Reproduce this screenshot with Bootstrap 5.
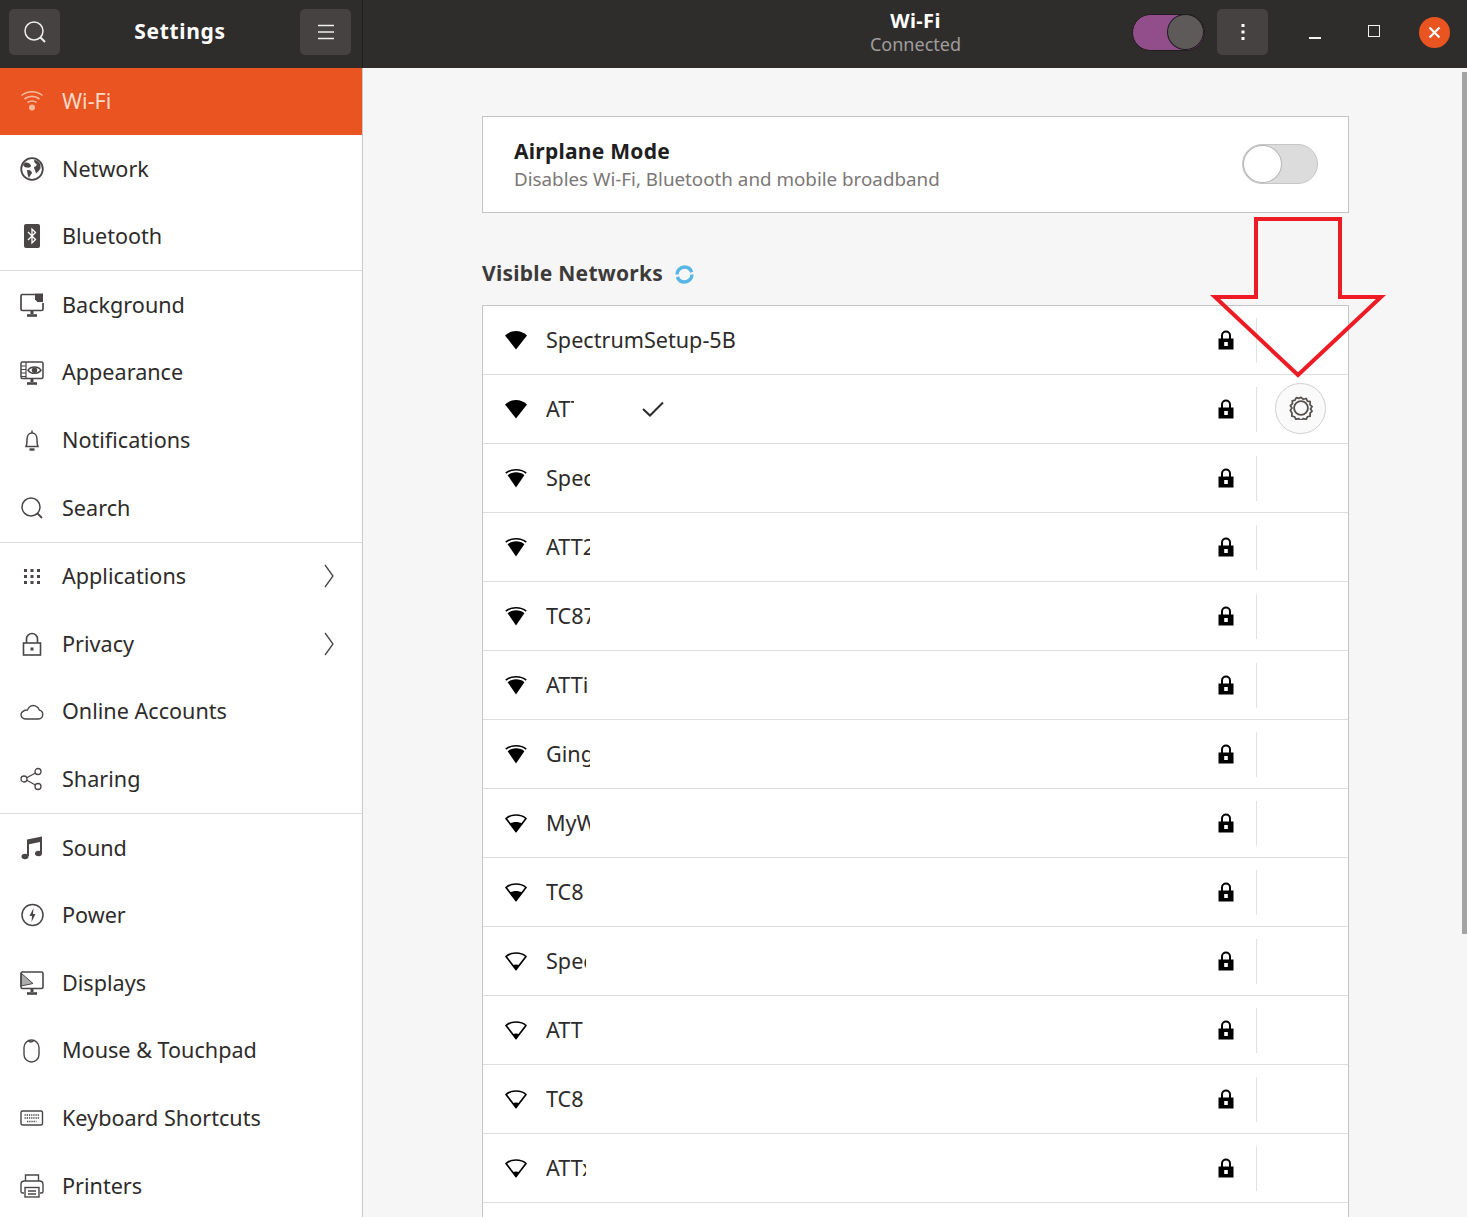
<!DOCTYPE html>
<html lang="en">
<head>
    <title>Settings</title>
    <meta charset="utf-8">
    <meta name="viewport" content="width=device-width, initial-scale=1">
    <link href="https://cdn.jsdelivr.net/npm/bootstrap@5.3.3/dist/css/bootstrap.min.css" rel="stylesheet">
    <script src="https://cdn.jsdelivr.net/npm/bootstrap@5.3.3/dist/js/bootstrap.bundle.min.js"></script>
    <style>
        html, body {
            height: 100%;
            overflow: hidden;
        }
        body {
            font-family: "Noto Sans", "Open Sans", sans-serif;
            background-color: #f6f6f6;
            color: #2e2b2b;
        }
        .app-window {
            height: 1217px;
            width: 1467px;
            position: relative;
            overflow: hidden;
        }
        .title-bar {
            height: 67.5px;
            background-color: #2f2c2c;
            color: #fff;
            flex-shrink: 0;
        }
        .title-left {
            width: 363px;
            padding: 0 11px 3px 9px;
            border-right: 1px solid #1f1d1d;
        }
        .title-right {
            padding: 0 17px 3px 0;
            position: relative;
        }
        .head-btn {
            width: 51px;
            height: 46px;
            background-color: #464242;
            border-radius: 5px;
        }
        .app-name {
            font-weight: 700;
            font-size: 21px;
            letter-spacing: .7px;
            margin-bottom: 2px;
        }
        .page-title {
            font-weight: 700;
            font-size: 20px;
            line-height: 24px;
            letter-spacing: .4px;
        }
        .page-sub {
            font-size: 18px;
            line-height: 22px;
            color: #a09d9d;
        }
        .title-center {
            width: 1105px;
            left: 0;
            top: 9px;
            position: absolute;
        }
        .head-switch {
            width: 73px;
            height: 37px;
            background-color: #924d8b;
            border-radius: 19px;
            border: 1px solid #1f1d1d;
            margin-right: 12px;
        }
        .head-knob {
            width: 37px;
            height: 36px;
            border-radius: 50%;
            background-color: #5e5a5a;
            border: 1px solid #1f1d1d;
        }
        .win-min {
            width: 12px;
            height: 2px;
            background-color: #f2f2f2;
            margin: 12px 0 0 41px;
        }
        .win-max {
            width: 12px;
            height: 12px;
            border: 1.5px solid #f2f2f2;
            margin: 0 0 2px 47px;
        }
        .win-close {
            width: 31px;
            height: 31px;
            border-radius: 50%;
            background-color: #e95420;
            margin-left: 39px;
        }
        .side-nav {
            width: 363px;
            background-color: #fff;
            border-right: 1px solid #c9c9c9;
            flex-shrink: 0;
        }
        .side-row {
            height: 67.6px;
            padding: 0 28px 0 20px;
            gap: 18px;
            font-size: 21.6px;
            color: #2e2b2b;
            text-decoration: none;
        }
        .side-row svg {
            flex-shrink: 0;
            color: #4a4646;
        }
        .side-active {
            background-color: #e95420;
            color: #fbd9c8;
        }
        .side-active svg {
            color: #f9b89c;
        }
        .side-sep {
            height: 1px;
            background-color: #dcdcdc;
        }
        .side-more {
            color: #6e6a6a;
        }
        .main-pane {
            padding: 48.5px 0 0 119px;
            position: relative;
        }
        .main-col {
            width: 867px;
        }
        .air-box {
            height: 97px;
            background-color: #fff;
            border: 1px solid #c4c4c4;
            padding: 0 30px 0 31px;
        }
        .air-title {
            font-weight: 700;
            font-size: 21px;
            line-height: 27px;
            letter-spacing: .25px;
            color: #201e1e;
        }
        .air-sub {
            font-size: 18.8px;
            line-height: 26px;
            padding-top: 1px;
            color: #7b7777;
        }
        .air-switch {
            width: 76px;
            height: 40px;
            background-color: #dcdcdc;
            border: 1px solid #c6c6c6;
            border-radius: 20px;
            margin-bottom: 2px;
        }
        .air-knob {
            width: 39px;
            height: 38px;
            border-radius: 50%;
            background-color: #fff;
            border: 1px solid #b4b4b4;
        }
        .net-head {
            height: 92px;
            padding-top: 30px;
            gap: 12px;
            font-weight: 700;
            font-size: 21px;
            letter-spacing: .25px;
            color: #3d3a3a;
        }
        .net-list {
            background-color: #fff;
            border: 1px solid #c4c4c4;
            border-bottom: 0;
        }
        .net-row {
            height: 69px;
            padding-left: 21px;
            border-bottom: 1px solid #dedede;
        }
        .net-name {
            margin: 0 0 0 18px;
            font-size: 21.6px;
            color: #2e2b2b;
            white-space: nowrap;
            overflow: hidden;
        }
        .net-check {
            margin-left: 68px;
        }
        .net-lock {
            margin-left: auto;
        }
        .net-gap {
            width: 92px;
            height: 45px;
            margin-left: 22px;
            border-left: 1px solid #e2e2e2;
            flex-shrink: 0;
        }
        .gear-btn {
            width: 51px;
            height: 51px;
            border-radius: 50%;
            background-color: #fafafa;
            border: 1px solid #cfcfcf;
            margin: 0 0 2px 18px;
            flex-shrink: 0;
        }
        .scroll-thumb {
            position: absolute;
            right: 0;
            top: 4px;
            width: 5px;
            height: 862px;
            background-color: #a3a3a3;
        }
        .red-arrow {
            position: absolute;
            left: 0;
            top: 0;
            pointer-events: none;
        }
        .w-28 { width: 28px; }
        .w-38 { width: 38px; }
        .w-40 { width: 40px; }
        .w-44 { width: 44px; }
    </style>
</head>
<body>
<svg width="0" height="0" class="position-absolute">
    <symbol id="i-wifi4" viewBox="0 0 24 20"><path d="M1 5.5C7 -.5 17 -.5 23 5.5L12 19.5Z" fill="#000"/></symbol>
    <symbol id="i-wifi3" viewBox="0 0 24 20"><path d="M1.8 5.200C7 .6 17 .6 22.200 5.200" fill="none" stroke="#000" stroke-width="1.6"/><path d="M3.600 7.200C8 3.400 16 3.400 20.400 7.200L12 19.500Z" fill="#000"/></symbol>
    <symbol id="i-wifi2" viewBox="0 0 24 20"><path d="M2 5.500C7 .8 17 .8 22 5.500L12 18.500Z" fill="none" stroke="#000" stroke-width="1.700" stroke-linejoin="round"/><path d="M6.200 10.400C9.500 8.400 14.500 8.400 17.800 10.400L12 19.500Z" fill="#000"/></symbol>
    <symbol id="i-wifi1" viewBox="0 0 24 20"><path d="M2 5.500C7 .8 17 .8 22 5.500L12 18.500Z" fill="none" stroke="#000" stroke-width="1.700" stroke-linejoin="round"/><path d="M8.800 14.200C10.600 13.400 13.400 13.400 15.200 14.200L12 19.500Z" fill="#000"/></symbol>
    <symbol id="i-lock" viewBox="0 0 16 20"><path d="M4 9V5.500a4 4 0 0 1 8 0V9" fill="none" stroke="#000" stroke-width="2"/><path d="M0.500 8.500h15V19.500H0.500ZM6.200 12v4h3.600v-4Z" fill="#000" fill-rule="evenodd"/></symbol>
</svg>

<div class="app-window d-flex flex-column">
    <div class="title-bar d-flex">
        <div class="title-left d-flex align-items-center justify-content-between">
            <div class="head-btn d-flex align-items-center justify-content-center">
                <svg width="24" height="24" viewBox="0 0 24 24" fill="none" stroke="#eee" stroke-width="1.5"><circle cx="11" cy="11" r="9"/><path d="M17.500 17.500L22 22" stroke-width="2"/></svg>
            </div>
            <div class="app-name">Settings</div>
            <div class="head-btn d-flex align-items-center justify-content-center">
                <svg width="16" height="16" viewBox="0 0 16 16" stroke="#eee" stroke-width="1.400"><path d="M0 1.500H16M0 8H16M0 14.500H16"/></svg>
            </div>
        </div>
        <div class="title-right flex-grow-1 d-flex align-items-center justify-content-end">
            <div class="title-center text-center">
                <div class="page-title">Wi-Fi</div>
                <div class="page-sub">Connected</div>
            </div>
            <div class="head-switch d-flex justify-content-end align-items-center">
                <div class="head-knob"></div>
            </div>
            <div class="head-btn d-flex align-items-center justify-content-center">
                <svg width="4" height="16" viewBox="0 0 4 16" fill="#fff"><rect x="0.500" y="0" width="3" height="3"/><rect x="0.500" y="6.500" width="3" height="3"/><rect x="0.500" y="13" width="3" height="3"/></svg>
            </div>
            <div class="win-min"></div>
            <div class="win-max"></div>
            <div class="win-close d-flex align-items-center justify-content-center">
                <svg width="13" height="13" viewBox="0 0 13 13" stroke="#fff" stroke-width="2.200"><path d="M1.500 1.500L11.500 11.500M11.500 1.500L1.500 11.500"/></svg>
            </div>
        </div>
    </div>

    <div class="d-flex flex-grow-1 overflow-hidden">
        <nav class="side-nav">
            <a class="side-row side-active d-flex align-items-center">
                <svg width="24" height="24" viewBox="0 0 24 24" fill="none" stroke="currentColor" stroke-width="1.600"><path d="M1.500 6.500C7.500 1.500 16.500 1.500 22.500 6.500M4.500 10C9 6.500 15 6.500 19.500 10M7.500 13.500C10.500 11.500 13.500 11.500 16.500 13.500"/><circle cx="12" cy="18.500" r="3" fill="currentColor" stroke="none"/></svg>
                <span>Wi-Fi</span>
            </a>
            <a class="side-row d-flex align-items-center">
                <svg width="24" height="24" viewBox="0 0 24 24" fill="none"><circle cx="12" cy="12" r="10.800" stroke="currentColor" stroke-width="1.800"/><path d="M5 5.500C8 5 9.500 6 11 8.500C11.500 10 9 11 7 10.500C5 11 3.500 9 3 8ZM7 13C10 12.500 12 14 12 16C11 18 9.500 19 9 21C7.500 19 7.500 16 7 13ZM14 3C16.500 3 19 5 20.500 7.500L20.500 11.500C19 13.500 17.500 15.500 16 16.500C15.500 13.500 14 12 14 10C16 9.500 17 8.500 16.500 7C15 6.500 14 5 14 3Z" fill="currentColor"/></svg>
                <span>Network</span>
            </a>
            <a class="side-row d-flex align-items-center">
                <svg width="24" height="24" viewBox="0 0 24 24"><rect x="4" y="0" width="16" height="24" rx="2" fill="currentColor"/><path d="M8 8L15.500 15.500L12 19V5L15.500 8.500L8 16" fill="none" stroke="#fff" stroke-width="1.300"/></svg>
                <span>Bluetooth</span>
            </a>
            <div class="side-sep"></div>
            <a class="side-row d-flex align-items-center">
                <svg width="24" height="24" viewBox="0 0 24 24" fill="none" stroke="currentColor" stroke-width="1.700"><path d="M15 1.500H2.500a1.500 1.500 0 0 0-1.500 1.500V16a1.500 1.500 0 0 0 1.500 1.500h19A1.500 1.500 0 0 0 23 16V10"/><path d="M15 0.500H23V9H17.500L15 6.500Z" fill="currentColor" stroke="none"/><path d="M12 17.500V21" stroke-width="3"/><path d="M7 22.500H17" stroke-width="2.600"/></svg>
                <span>Background</span>
            </a>
            <a class="side-row d-flex align-items-center">
                <svg width="24" height="24" viewBox="0 0 24 24" fill="none" stroke="currentColor" stroke-width="1.500"><rect x="1" y="1" width="22" height="16.500" rx="1.500"/><path d="M1 5H6M1 8.500H6M1 12H6M1 15.500H6M6 1V17" stroke-width="1.200"/><path d="M8 9.200C11 5 18 5 21 9.200C18 13.400 11 13.400 8 9.200Z"/><circle cx="14.500" cy="9.200" r="2" fill="currentColor"/><path d="M12 17.500V21" stroke-width="3"/><path d="M7 22.500H17" stroke-width="2.600"/></svg>
                <span>Appearance</span>
            </a>
            <a class="side-row d-flex align-items-center">
                <svg width="24" height="24" viewBox="0 0 24 24" fill="none" stroke="currentColor" stroke-width="1.500"><path d="M6 18.500C7 16.500 7 14.500 7 11C7 7.500 9 5 12 5C15 5 17 7.500 17 11C17 14.500 17 16.500 18 18.500Z"/><path d="M12 2.500V5"/><path d="M9.500 21.500H14.500" stroke-width="2.400"/></svg>
                <span>Notifications</span>
            </a>
            <a class="side-row d-flex align-items-center">
                <svg width="24" height="24" viewBox="0 0 24 24" fill="none" stroke="currentColor" stroke-width="1.500"><circle cx="11" cy="11" r="9"/><path d="M17.500 17.500L22 22" stroke-width="1.800"/></svg>
                <span>Search</span>
            </a>
            <div class="side-sep"></div>
            <a class="side-row d-flex align-items-center">
                <svg width="24" height="24" viewBox="0 0 24 24" fill="currentColor"><rect x="4" y="5" width="3" height="3"/><rect x="10.500" y="5" width="3" height="3"/><rect x="17" y="5" width="3" height="3"/><rect x="4" y="11" width="3" height="3"/><rect x="10.500" y="11" width="3" height="3"/><rect x="17" y="11" width="3" height="3"/><rect x="4" y="17" width="3" height="3"/><rect x="10.500" y="17" width="3" height="3"/><rect x="17" y="17" width="3" height="3"/></svg>
                <span class="flex-grow-1">Applications</span>
                <svg class="side-more" width="10" height="24" viewBox="0 0 10 24" fill="none" stroke="currentColor" stroke-width="1.300"><path d="M1 1L9 12L1 23"/></svg>
            </a>
            <a class="side-row d-flex align-items-center">
                <svg width="24" height="24" viewBox="0 0 24 24" fill="none" stroke="currentColor" stroke-width="1.600"><rect x="3.500" y="11" width="17" height="12"/><path d="M6.500 11V7a5.500 5.500 0 0 1 11 0V11"/><rect x="10.500" y="15.500" width="3" height="3" fill="currentColor" stroke="none"/></svg>
                <span class="flex-grow-1">Privacy</span>
                <svg class="side-more" width="10" height="24" viewBox="0 0 10 24" fill="none" stroke="currentColor" stroke-width="1.300"><path d="M1 1L9 12L1 23"/></svg>
            </a>
            <a class="side-row d-flex align-items-center">
                <svg width="24" height="24" viewBox="0 0 24 24" fill="none" stroke="currentColor" stroke-width="1.400"><path d="M6 19H18.500A4.500 4.500 0 0 0 19.500 10.200C18 6 13 4 9.500 7C9 7.500 8 8.500 7.500 10C4 10 1 12 1 14.500C1 17.500 3.500 19 6 19Z"/></svg>
                <span>Online Accounts</span>
            </a>
            <a class="side-row d-flex align-items-center">
                <svg width="24" height="24" viewBox="0 0 24 24" fill="none" stroke="currentColor" stroke-width="1.300"><circle cx="18" cy="4.500" r="3"/><circle cx="4" cy="12" r="3"/><circle cx="18" cy="19.500" r="3"/><path d="M6.800 10.700L15.400 6M6.800 13.300L15.400 18"/></svg>
                <span>Sharing</span>
            </a>
            <div class="side-sep"></div>
            <a class="side-row d-flex align-items-center">
                <svg width="24" height="24" viewBox="0 0 24 24" fill="currentColor"><path d="M7 20V3.500L22 .5V17h-2V6L9 8.200V20Z"/><ellipse cx="5" cy="20.500" rx="3.500" ry="2.800"/><ellipse cx="18.500" cy="17.500" rx="3.500" ry="2.800"/></svg>
                <span>Sound</span>
            </a>
            <a class="side-row d-flex align-items-center">
                <svg width="24" height="24" viewBox="0 0 24 24" fill="none" stroke="currentColor" stroke-width="1.500"><circle cx="12.500" cy="12" r="10.500"/><path d="M13.500 5L9.500 13H12L11.500 19L15.500 11H13Z" fill="currentColor" stroke="none"/></svg>
                <span>Power</span>
            </a>
            <a class="side-row d-flex align-items-center">
                <svg width="24" height="24" viewBox="0 0 24 24" fill="none" stroke="currentColor" stroke-width="1.600"><rect x="1" y="1" width="22" height="16.500" rx="1.500"/><path d="M1 2L13 12.500L1 15Z" fill="currentColor" fill-opacity=".45" stroke-width="1"/><path d="M12 17.500V21" stroke-width="3"/><path d="M7 22.500H17" stroke-width="2.600"/></svg>
                <span>Displays</span>
            </a>
            <a class="side-row d-flex align-items-center">
                <svg width="24" height="24" viewBox="0 0 24 24" fill="none" stroke="currentColor" stroke-width="1.400"><rect x="4" y="1" width="15" height="22" rx="7.500"/><path d="M8.500 1.500C9.500 3.500 12 3.500 13.500 1.500"/></svg>
                <span>Mouse &amp; Touchpad</span>
            </a>
            <a class="side-row d-flex align-items-center">
                <svg width="24" height="24" viewBox="0 0 24 24" fill="none" stroke="currentColor" stroke-width="1.400"><rect x="1" y="5" width="21.500" height="14" rx="1.500"/><path d="M4.500 9H19M4.500 12H19M7 15.500H16.500" stroke-width="1.600" stroke-dasharray="1.300 .9"/></svg>
                <span>Keyboard Shortcuts</span>
            </a>
            <a class="side-row d-flex align-items-center">
                <svg width="24" height="24" viewBox="0 0 24 24" fill="none" stroke="currentColor" stroke-width="1.400"><path d="M5.500 7V1H18.500V7"/><path d="M4 19H2.500A1.500 1.500 0 0 1 1 17.500V10.500C1 8 2.500 7 4.500 7H19.500C21.500 7 23 8 23 10.500V17.500A1.500 1.500 0 0 1 21.500 19H20"/><rect x="5" y="13.500" width="14" height="9.500"/><path d="M8 17H16M8 20H16"/></svg>
                <span>Printers</span>
            </a>
        </nav>

        <main class="main-pane flex-grow-1">
            <div class="main-col">
                <div class="air-box d-flex align-items-center justify-content-between">
                    <div>
                        <div class="air-title">Airplane Mode</div>
                        <div class="air-sub">Disables Wi-Fi, Bluetooth and mobile broadband</div>
                    </div>
                    <div class="air-switch d-flex align-items-center">
                        <div class="air-knob"></div>
                    </div>
                </div>

                <div class="net-head d-flex align-items-center">
                    <span>Visible Networks</span>
                    <svg width="19" height="19" viewBox="0 0 19 19" fill="none" stroke="#58b6e4" stroke-width="3.400"><circle cx="9.500" cy="9.500" r="7.500" stroke-dasharray="21 2.500"/></svg>
                </div>

                <div class="net-list">
                    <div class="net-row d-flex align-items-center">
                        <svg width="24" height="20"><use href="#i-wifi4"/></svg>
                        <span class="net-name">SpectrumSetup-5B</span>
                        <svg class="net-lock" width="16" height="20"><use href="#i-lock"/></svg>
                        <div class="net-gap"></div>
                    </div>
                    <div class="net-row d-flex align-items-center">
                        <svg width="24" height="20"><use href="#i-wifi4"/></svg>
                        <span class="net-name w-28">ATT</span>
                        <svg class="net-check" width="22" height="16" viewBox="0 0 22 16" fill="none" stroke="#2e2b2b" stroke-width="2"><path d="M1 8L8 14.500L21 1.500"/></svg>
                        <svg class="net-lock" width="16" height="20"><use href="#i-lock"/></svg>
                        <div class="net-gap d-flex align-items-center">
                            <div class="gear-btn d-flex align-items-center justify-content-center">
                                <svg width="24" height="24" viewBox="0 0 26 26" fill="none" stroke="#55514f"><path d="M13 1.500l2.500 2 3-.8 1.500 2.800 3 .7-.3 3.100 2.300 2.200-1.700 2.500 1.700 2.500-2.300 2.200.3 3.100-3 .7-1.500 2.800-3-.8-2.500 2-2.500-2-3 .8-1.500-2.800-3-.7.3-3.100L1.500 15.500 3.200 13 1.500 10.500l2.300-2.200-.3-3.100 3-.7 1.500-2.800 3 .8Z" stroke-width="1.900" stroke-linejoin="round"/><circle cx="13" cy="13" r="7.500" stroke-width="2"/></svg>
                            </div>
                        </div>
                    </div>
                    <div class="net-row d-flex align-items-center">
                        <svg width="24" height="20"><use href="#i-wifi3"/></svg>
                        <span class="net-name w-44">Spectrum</span>
                        <svg class="net-lock" width="16" height="20"><use href="#i-lock"/></svg>
                        <div class="net-gap"></div>
                    </div>
                    <div class="net-row d-flex align-items-center">
                        <svg width="24" height="20"><use href="#i-wifi3"/></svg>
                        <span class="net-name w-44">ATT2xx</span>
                        <svg class="net-lock" width="16" height="20"><use href="#i-lock"/></svg>
                        <div class="net-gap"></div>
                    </div>
                    <div class="net-row d-flex align-items-center">
                        <svg width="24" height="20"><use href="#i-wifi3"/></svg>
                        <span class="net-name w-44">TC872x</span>
                        <svg class="net-lock" width="16" height="20"><use href="#i-lock"/></svg>
                        <div class="net-gap"></div>
                    </div>
                    <div class="net-row d-flex align-items-center">
                        <svg width="24" height="20"><use href="#i-wifi3"/></svg>
                        <span class="net-name w-44">ATTi</span>
                        <svg class="net-lock" width="16" height="20"><use href="#i-lock"/></svg>
                        <div class="net-gap"></div>
                    </div>
                    <div class="net-row d-flex align-items-center">
                        <svg width="24" height="20"><use href="#i-wifi3"/></svg>
                        <span class="net-name w-44">Ginger</span>
                        <svg class="net-lock" width="16" height="20"><use href="#i-lock"/></svg>
                        <div class="net-gap"></div>
                    </div>
                    <div class="net-row d-flex align-items-center">
                        <svg width="24" height="20"><use href="#i-wifi2"/></svg>
                        <span class="net-name w-44">MyWifi</span>
                        <svg class="net-lock" width="16" height="20"><use href="#i-lock"/></svg>
                        <div class="net-gap"></div>
                    </div>
                    <div class="net-row d-flex align-items-center">
                        <svg width="24" height="20"><use href="#i-wifi2"/></svg>
                        <span class="net-name w-38">TC8</span>
                        <svg class="net-lock" width="16" height="20"><use href="#i-lock"/></svg>
                        <div class="net-gap"></div>
                    </div>
                    <div class="net-row d-flex align-items-center">
                        <svg width="24" height="20"><use href="#i-wifi1"/></svg>
                        <span class="net-name w-40">Spectrum</span>
                        <svg class="net-lock" width="16" height="20"><use href="#i-lock"/></svg>
                        <div class="net-gap"></div>
                    </div>
                    <div class="net-row d-flex align-items-center">
                        <svg width="24" height="20"><use href="#i-wifi1"/></svg>
                        <span class="net-name w-40">ATT</span>
                        <svg class="net-lock" width="16" height="20"><use href="#i-lock"/></svg>
                        <div class="net-gap"></div>
                    </div>
                    <div class="net-row d-flex align-items-center">
                        <svg width="24" height="20"><use href="#i-wifi1"/></svg>
                        <span class="net-name w-38">TC8</span>
                        <svg class="net-lock" width="16" height="20"><use href="#i-lock"/></svg>
                        <div class="net-gap"></div>
                    </div>
                    <div class="net-row d-flex align-items-center">
                        <svg width="24" height="20"><use href="#i-wifi1"/></svg>
                        <span class="net-name w-40">ATTxxx</span>
                        <svg class="net-lock" width="16" height="20"><use href="#i-lock"/></svg>
                        <div class="net-gap"></div>
                    </div>
                    <div class="net-row d-flex align-items-center"></div>
                </div>
            </div>
            <div class="scroll-thumb"></div>
        </main>
    </div>

    <svg class="red-arrow" width="1467" height="1217" viewBox="0 0 1467 1217" fill="none" stroke="#ed1c24" stroke-width="4" stroke-linejoin="miter">
        <path d="M1256 219H1340V297H1381L1298 375L1215 297H1256Z"/>
    </svg>
</div>
</body>
</html>
